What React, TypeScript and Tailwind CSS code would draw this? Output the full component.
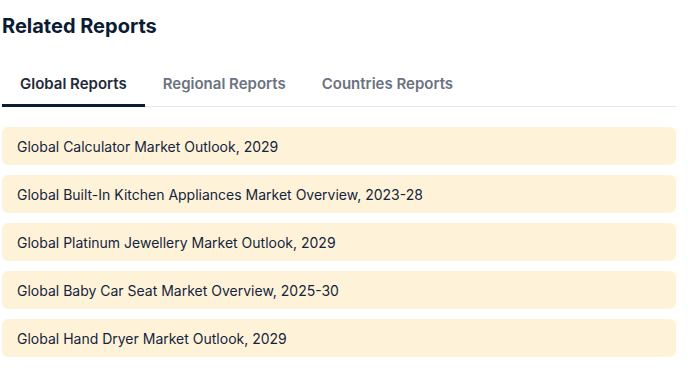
const tabs = ["Global Reports", "Regional Reports", "Countries Reports"]

const reports = [
  "Global Calculator Market Outlook, 2029",
  "Global Built-In Kitchen Appliances Market Overview, 2023-28",
  "Global Platinum Jewellery Market Outlook, 2029",
  "Global Baby Car Seat Market Overview, 2025-30",
  "Global Hand Dryer Market Outlook, 2029",
]

const App = () => {
  const active = 0

  return (
    <div className="w-[694px] h-[372px] bg-white font-['Inter',sans-serif] overflow-hidden">
      <div className="w-[674px] ml-[2px] pt-[12px]">
        <h2 className="text-[20px] leading-[28px] font-bold text-[#0b1b33]">
          Related Reports
        </h2>
        <div className="flex mt-[18px] border-b border-[#e5e7eb]">
          {tabs.map((tab, i) => (
            <button
              key={tab}
              data-active={i === active}
              className="px-[18px] h-[49px] pt-[6px] -mb-px text-[15px] font-semibold text-[#6b7280] border-b-[3px] border-transparent data-[active=true]:text-[#1f2937] data-[active=true]:border-[#0b1b33]"
            >
              {tab}
            </button>
          ))}
        </div>
        <div className="flex flex-col gap-[10px] mt-[20px]">
          {reports.map((r) => (
            <div
              key={r}
              className="h-[38px] flex items-center px-[15px] rounded-[6px] bg-[#fef3d8] text-[14px] text-[#142440]"
            >
              {r}
            </div>
          ))}
        </div>
      </div>
    </div>
  )
}

export default App
